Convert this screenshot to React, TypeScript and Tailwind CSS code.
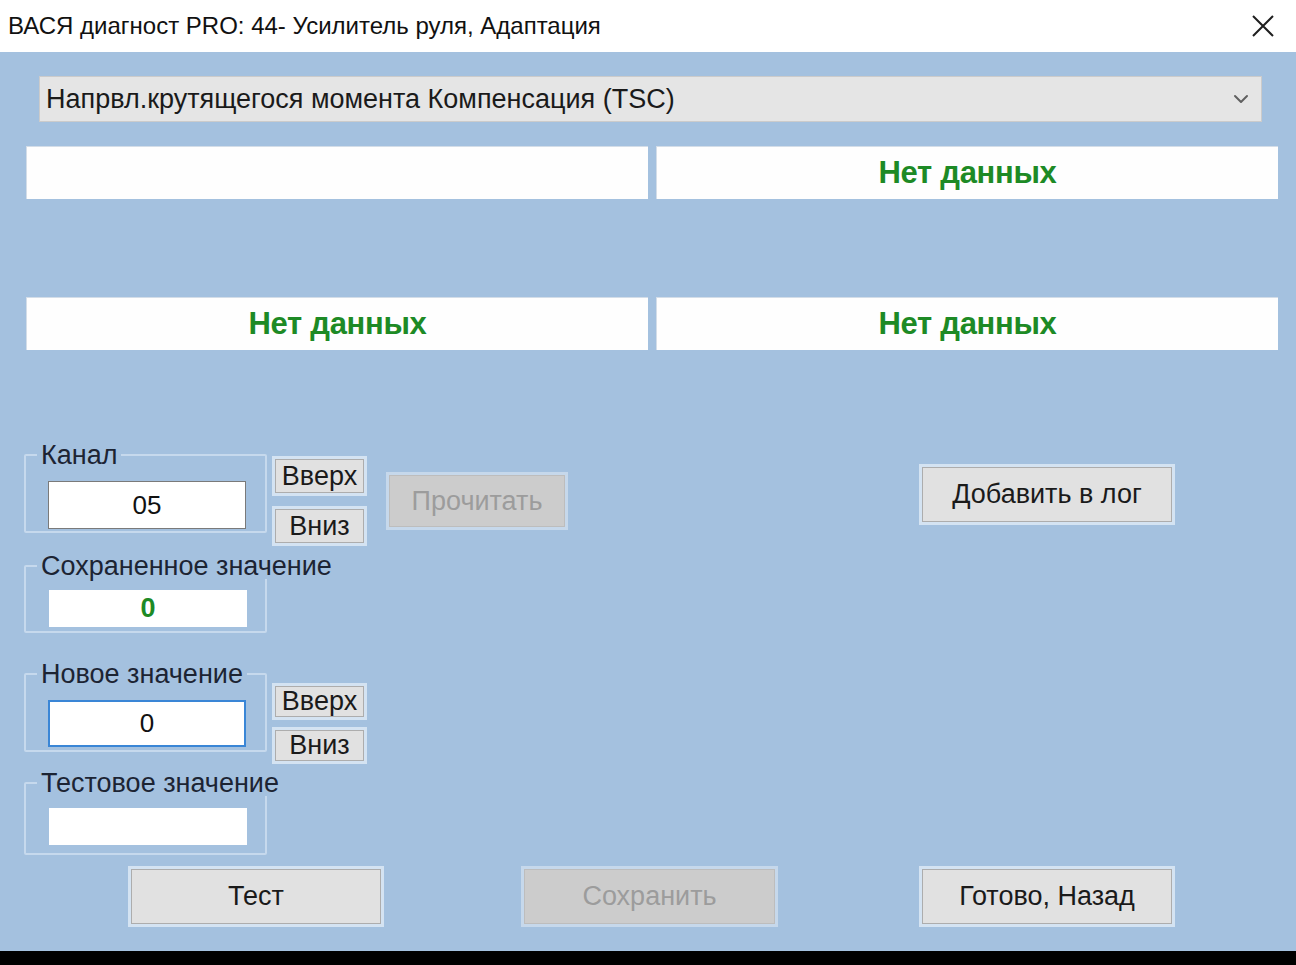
import React from "react";
import { ChevronDown } from "lucide-react";

// Windows-style dialog: ВАСЯ диагност, адаптация канала

function WinButton({
  label,
  w,
  h,
  disabled = false,
  textSize = "text-[27px]",
}: {
  label: string;
  w: string;
  h: string;
  disabled?: boolean;
  textSize?: string;
}) {
  return (
    <button
      className={`${w} ${h} ${textSize} flex items-center justify-center border-[3px] leading-none ${
        disabled
          ? "bg-[#cccccc] border-[#c6d8eb] text-[#9c9c9c] shadow-[inset_0_0_0_1px_#bdbdbd]"
          : "bg-[#e1e1e1] border-[#d4e3f2] text-[#1a1a1a] shadow-[inset_0_0_0_1px_#adadad]"
      }`}
    >
      {label}
    </button>
  );
}

function DataBox({ text }: { text?: string }) {
  return (
    <div className="h-[53px] bg-[#fefefe] border-t border-l border-[#d3dde8] flex items-center justify-center">
      {text && (
        <span className="text-[31px] font-bold text-[#1d8a25] tracking-[-0.3px]">
          {text}
        </span>
      )}
    </div>
  );
}

function Group({
  label,
  className = "",
  children,
}: {
  label: string;
  className?: string;
  children: React.ReactNode;
}) {
  return (
    <fieldset
      className={`w-[243px] min-w-0 border-2 border-[#c6d9ed] rounded-[2px] ${className}`}
    >
      <legend className="ml-[11px] px-[4px] text-[27px] leading-[26px] whitespace-nowrap text-[#1c2433]">
        {label}
      </legend>
      {children}
    </fieldset>
  );
}

export default function App() {
  return (
    <div className="w-[1296px] h-[965px] flex flex-col overflow-hidden font-['Liberation_Sans',Arial,sans-serif]">
      {/* Заголовок окна */}
      <div className="h-[52px] shrink-0 bg-white flex items-center justify-between pl-[8px] pr-[20px]">
        <span className="text-[24px] text-[#111]">
          ВАСЯ диагност PRO: 44- Усилитель руля, Адаптация
        </span>
        <svg width="24" height="24" viewBox="0 0 24 24" className="mr-[1px]">
          <path
            d="M2 2 L22 22 M22 2 L2 22"
            stroke="#1f1f1f"
            strokeWidth="2"
            fill="none"
          />
        </svg>
      </div>

      {/* Основная область */}
      <div className="flex-1 min-h-0 bg-[#a4c1df] flex flex-col pt-[24px]">
        {/* Выпадающий список */}
        <div className="ml-[39px] mr-[34px] h-[46px] shrink-0 bg-[#e5e5e5] border border-[#cbcbcb] flex items-center justify-between pl-[6px] pr-[8px]">
          <span className="text-[27px] text-[#1a1a1a]">
            Напрвл.крутящегося момента Компенсация (TSC)
          </span>
          <ChevronDown size={24} strokeWidth={2} className="text-[#606060]" />
        </div>

        {/* Поля данных */}
        <div className="mt-[24px] pl-[26px] pr-[18px] grid grid-cols-2 gap-x-[8px] gap-y-[98px]">
          <DataBox />
          <DataBox text="Нет данных" />
          <DataBox text="Нет данных" />
          <DataBox text="Нет данных" />
        </div>

        {/* Нижняя часть */}
        <div className="flex items-start">
          {/* Группы */}
          <div className="ml-[24px] pt-[92px] flex flex-col">
            <Group label="Канал" className="pb-[2px]">
              <div className="ml-[22px] mt-[13px] w-[198px] h-[48px] bg-white border border-[#7a7a7a] flex items-center justify-center text-[26px] text-[#111]">
                05
              </div>
            </Group>
            <Group label="Сохраненное значение" className="mt-[20px] pb-[4px]">
              <div className="ml-[23px] mt-[11px] w-[198px] h-[37px] bg-white flex items-center justify-center text-[27px] font-bold text-[#1d8a25]">
                0
              </div>
            </Group>
            <Group label="Новое значение" className="mt-[28px] pb-[3px]">
              <div className="ml-[22px] mt-[13px] w-[198px] h-[47px] bg-white border-2 border-[#3a86d6] flex items-center justify-center text-[26px] text-[#111]">
                0
              </div>
            </Group>
            <Group label="Тестовое значение" className="mt-[18px] pb-[8px]">
              <div className="ml-[23px] mt-[12px] w-[198px] h-[37px] bg-white" />
            </Group>
          </div>

          {/* Вверх / Вниз */}
          <div className="ml-[5px] pt-[106px] flex flex-col">
            <WinButton label="Вверх" w="w-[95px]" h="h-[40px]" />
            <div className="mt-[10px]">
              <WinButton label="Вниз" w="w-[95px]" h="h-[40px]" />
            </div>
            <div className="mt-[137px]">
              <WinButton label="Вверх" w="w-[95px]" h="h-[37px]" />
            </div>
            <div className="mt-[7px]">
              <WinButton label="Вниз" w="w-[95px]" h="h-[37px]" />
            </div>
          </div>

          <div className="ml-[19px] pt-[122px]">
            <WinButton label="Прочитать" w="w-[182px]" h="h-[58px]" disabled />
          </div>

          <div className="ml-[351px] pt-[114px]">
            <WinButton label="Добавить в лог" w="w-[256px]" h="h-[61px]" />
          </div>
        </div>

        {/* Кнопки внизу */}
        <div className="mt-[11px] flex">
          <div className="ml-[128px]">
            <WinButton label="Тест" w="w-[256px]" h="h-[61px]" />
          </div>
          <div className="ml-[137px]">
            <WinButton label="Сохранить" w="w-[257px]" h="h-[61px]" disabled />
          </div>
          <div className="ml-[141px]">
            <WinButton label="Готово, Назад" w="w-[256px]" h="h-[61px]" />
          </div>
        </div>
      </div>

      <div className="h-[14px] shrink-0 bg-black" />
    </div>
  );
}
